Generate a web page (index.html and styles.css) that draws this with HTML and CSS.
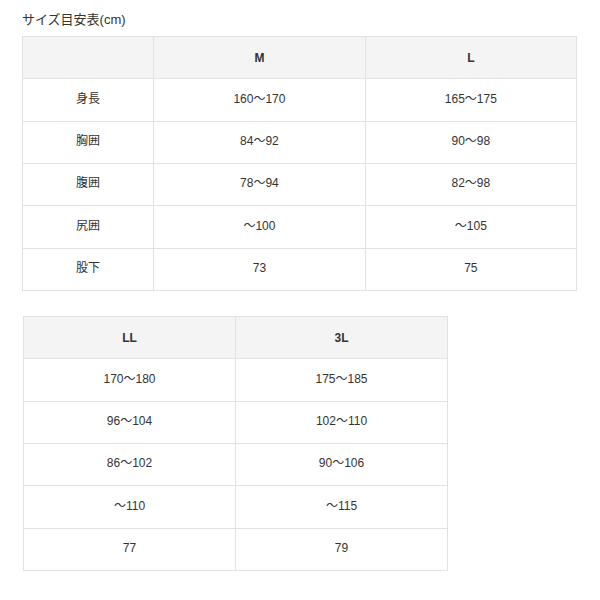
FILE: index.html
```html
<!DOCTYPE html>
<html lang="ja">
<head>
<meta charset="utf-8">
<link rel="stylesheet" href="styles.css">
</head>
<body>
<div class="page">
  <p class="title">サイズ目安表(cm)</p>
  <table class="size t1">
    <colgroup><col class="c-label"><col class="c-val"><col class="c-val"></colgroup>
    <thead><tr><th></th><th>M</th><th>L</th></tr></thead>
    <tbody>
      <tr><td>身長</td><td>160〜170</td><td>165〜175</td></tr>
      <tr><td>胸囲</td><td>84〜92</td><td>90〜98</td></tr>
      <tr><td>腹囲</td><td>78〜94</td><td>82〜98</td></tr>
      <tr><td>尻囲</td><td>〜100</td><td>〜105</td></tr>
      <tr><td>股下</td><td>73</td><td>75</td></tr>
    </tbody>
  </table>
  <table class="size t2">
    <colgroup><col class="c-val2"><col class="c-val2"></colgroup>
    <thead><tr><th>LL</th><th>3L</th></tr></thead>
    <tbody>
      <tr><td>170〜180</td><td>175〜185</td></tr>
      <tr><td>96〜104</td><td>102〜110</td></tr>
      <tr><td>86〜102</td><td>90〜106</td></tr>
      <tr><td>〜110</td><td>〜115</td></tr>
      <tr><td>77</td><td>79</td></tr>
    </tbody>
  </table>
</div>
</body>
</html>
```
FILE: styles.css
```css
html, body {
  margin: 0;
  padding: 0;
  background: #fff;
}
body {
  font-family: "Liberation Sans", Arial, "Noto Sans CJK JP", sans-serif;
  color: #333;
}
.page {
  padding: 12px 0 0 22px;
}
.title {
  margin: 0 0 9px 0;
  font-size: 13px;
  line-height: 15px;
  color: #333;
}
.size {
  border-collapse: separate;
  border-spacing: 0;
  table-layout: fixed;
  border-top: 1px solid #e2e2e2;
  border-left: 1px solid #e2e2e2;
}
.size th,
.size td {
  box-sizing: border-box;
  border-right: 1px solid #e2e2e2;
  border-bottom: 1px solid #e2e2e2;
  height: 42.35px;
  padding: 0 0 3px 0;
  line-height: 16px;
  text-align: center;
  vertical-align: middle;
  font-size: 12px;
  color: #333;
}
.size th {
  padding: 0;
  background: #f4f4f4;
  font-weight: bold;
}
.t1 { width: 555px; }
.c-label { width: 131px; }
.c-val { width: 211px; }
.t2 {
  width: 425px;
  margin: 25px 0 0 1px;
}
.c-val2 { width: 212px; }
```
